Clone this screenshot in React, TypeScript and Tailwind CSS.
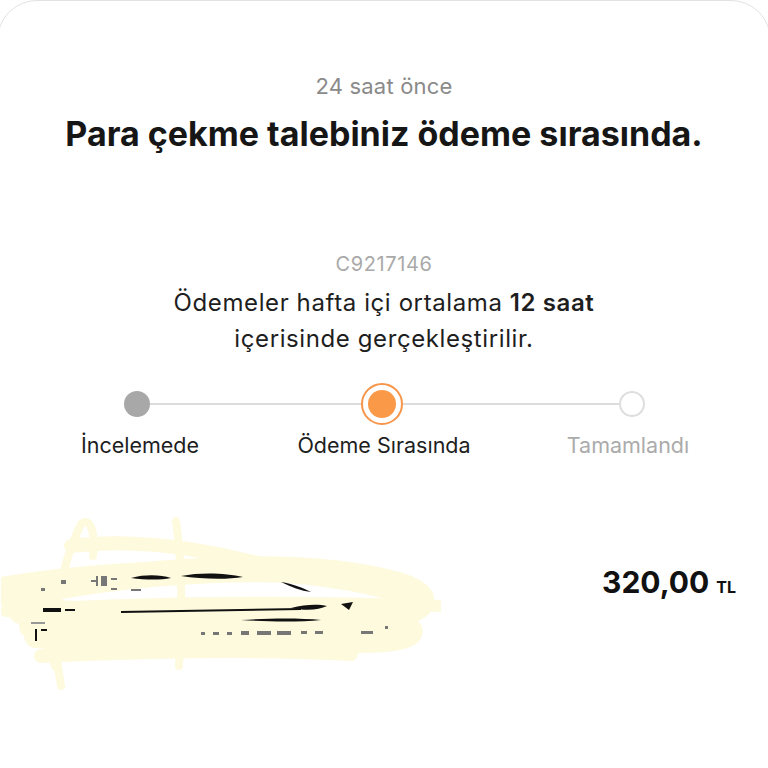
import React from "react";

function Redacted() {
  return (
    <svg width="440" height="180" viewBox="0 0 440 180" className="block">
      <g fill="none" stroke="#fdfade" strokeLinecap="round" strokeLinejoin="round">
        <path d="M60 170 C50 120 55 60 80 8 C90 0 95 20 92 40" strokeWidth="8" />
        <path d="M175 5 C180 40 182 90 178 150" strokeWidth="8" />
        <path d="M10 80 C120 55 300 40 400 70 C430 80 430 95 380 100 C260 110 120 100 20 95" strokeWidth="26" />
        <path d="M0 70 C150 45 330 50 420 85" strokeWidth="18" />
        <path d="M30 110 C140 100 300 95 400 110 C420 115 410 125 360 125 C250 128 120 125 35 120" strokeWidth="24" />
        <path d="M40 140 C150 135 260 133 350 138" strokeWidth="14" />
        <path d="M70 30 C150 20 240 40 300 60" strokeWidth="14" />
        <path d="M5 95 C150 85 300 85 440 90" strokeWidth="12" />
        <path d="M45 60 C40 90 45 120 55 150" strokeWidth="10" />
      </g>
      <g fill="#111">
        <path d="M130 62 C145 58 160 59 170 62 C160 64 145 64 130 62 Z" />
        <path d="M180 60 C200 56 225 57 242 61 C225 64 200 63 180 60 Z" />
        <path d="M280 66 C292 68 302 72 310 76 C300 75 290 71 280 66 Z" />
        <rect x="42" y="92" width="18" height="4" />
        <rect x="64" y="93" width="10" height="2" />
        <path d="M120 95 L300 92 L300 94 L120 97 Z" />
        <path d="M290 92 C305 88 318 88 326 90 C318 94 305 95 290 92 Z" />
        <path d="M340 88 L352 86 L348 94 Z" />
        <path d="M240 104 C270 102 300 102 320 104 C300 106 270 106 240 104 Z" />
        <rect x="34" y="113" width="2" height="12" />
        <rect x="40" y="113" width="6" height="2" />
        <rect x="30" y="106" width="14" height="2" fill="#999" />
        <g fill="#777">
          <rect x="200" y="116" width="4" height="3" />
          <rect x="212" y="116" width="6" height="3" />
          <rect x="226" y="116" width="5" height="3" />
          <rect x="240" y="115" width="8" height="4" />
          <rect x="256" y="115" width="14" height="4" />
          <rect x="276" y="115" width="14" height="4" />
          <rect x="300" y="115" width="6" height="3" />
          <rect x="314" y="115" width="8" height="3" />
          <rect x="360" y="115" width="12" height="3" />
          <rect x="384" y="110" width="3" height="3" />
          <rect x="110" y="72" width="6" height="2" />
          <rect x="130" y="73" width="10" height="2" />
          <rect x="40" y="72" width="4" height="3" />
          <rect x="60" y="64" width="5" height="4" />
          <rect x="90" y="64" width="6" height="2" />
          <rect x="95" y="60" width="2" height="10" />
          <rect x="100" y="60" width="6" height="10" />
          <rect x="110" y="62" width="6" height="2" />
        </g>
      </g>
    </svg>
  );
}

export default function App() {
  return (
    <div
      className="min-h-[768px] w-full overflow-hidden bg-white"
      style={{ fontFamily: "Inter, 'Noto Sans', sans-serif" }}
    >
      <div className="-mx-[3px] min-h-[800px] rounded-t-[40px] border border-[#e2e2e2] bg-white pt-[71px]">
        <div className="flex flex-col items-center px-[3px] text-center">
          <p className="text-[22px] leading-[28px] tracking-[0.2px] text-[#8a8a8a]">24 saat önce</p>
          <h1 className="mt-[15px] text-[34px] font-bold leading-[38px] text-[#161616]">
            Para çekme talebiniz ödeme sırasında.
          </h1>

          <p className="mt-[99px] text-[20px] leading-[24px] tracking-[0.6px] text-[#a9a9a9]">C9217146</p>
          <p className="mt-[9px] text-[24px] leading-[36px] tracking-[0.6px] text-[#1e1e1e]">
            Ödemeler hafta içi ortalama <span className="font-semibold">12 saat</span>
            <br />
            içerisinde gerçekleştirilir.
          </p>
        </div>

        <div className="mt-[26px] flex items-center pl-[126px]">
          <div className="h-[26px] w-[26px] rounded-full bg-[#a8a8a8]" />
          <div className="h-[2px] w-[211px] bg-[#dcdcdc]" />
          <div className="flex h-[42px] w-[42px] items-center justify-center rounded-full border-2 border-[#f7954a]">
            <div className="h-[28px] w-[28px] rounded-full bg-[#fa9a48]" />
          </div>
          <div className="h-[2px] w-[216px] bg-[#dcdcdc]" />
          <div className="h-[26px] w-[26px] rounded-full border-2 border-[#dedede] bg-white" />
        </div>

        <div className="mt-[6px] grid grid-cols-3 pl-[20px] pr-[20px] text-center text-[21.5px] leading-[28px]">
          <span className="text-[#1e1e1e]">İncelemede</span>
          <span className="text-[#1e1e1e]">Ödeme Sırasında</span>
          <span className="text-[#ababab]">Tamamlandı</span>
        </div>

        <div className="mt-[57px] flex items-start justify-between pl-[3px] pr-[34px]">
          <Redacted />
          <div className="mt-[48px] flex items-baseline gap-[7px] text-[#111]">
            <span className="text-[30px] font-bold leading-[36px]">320,00</span>
            <span className="text-[16px] font-bold">TL</span>
          </div>
        </div>
      </div>
    </div>
  );
}
